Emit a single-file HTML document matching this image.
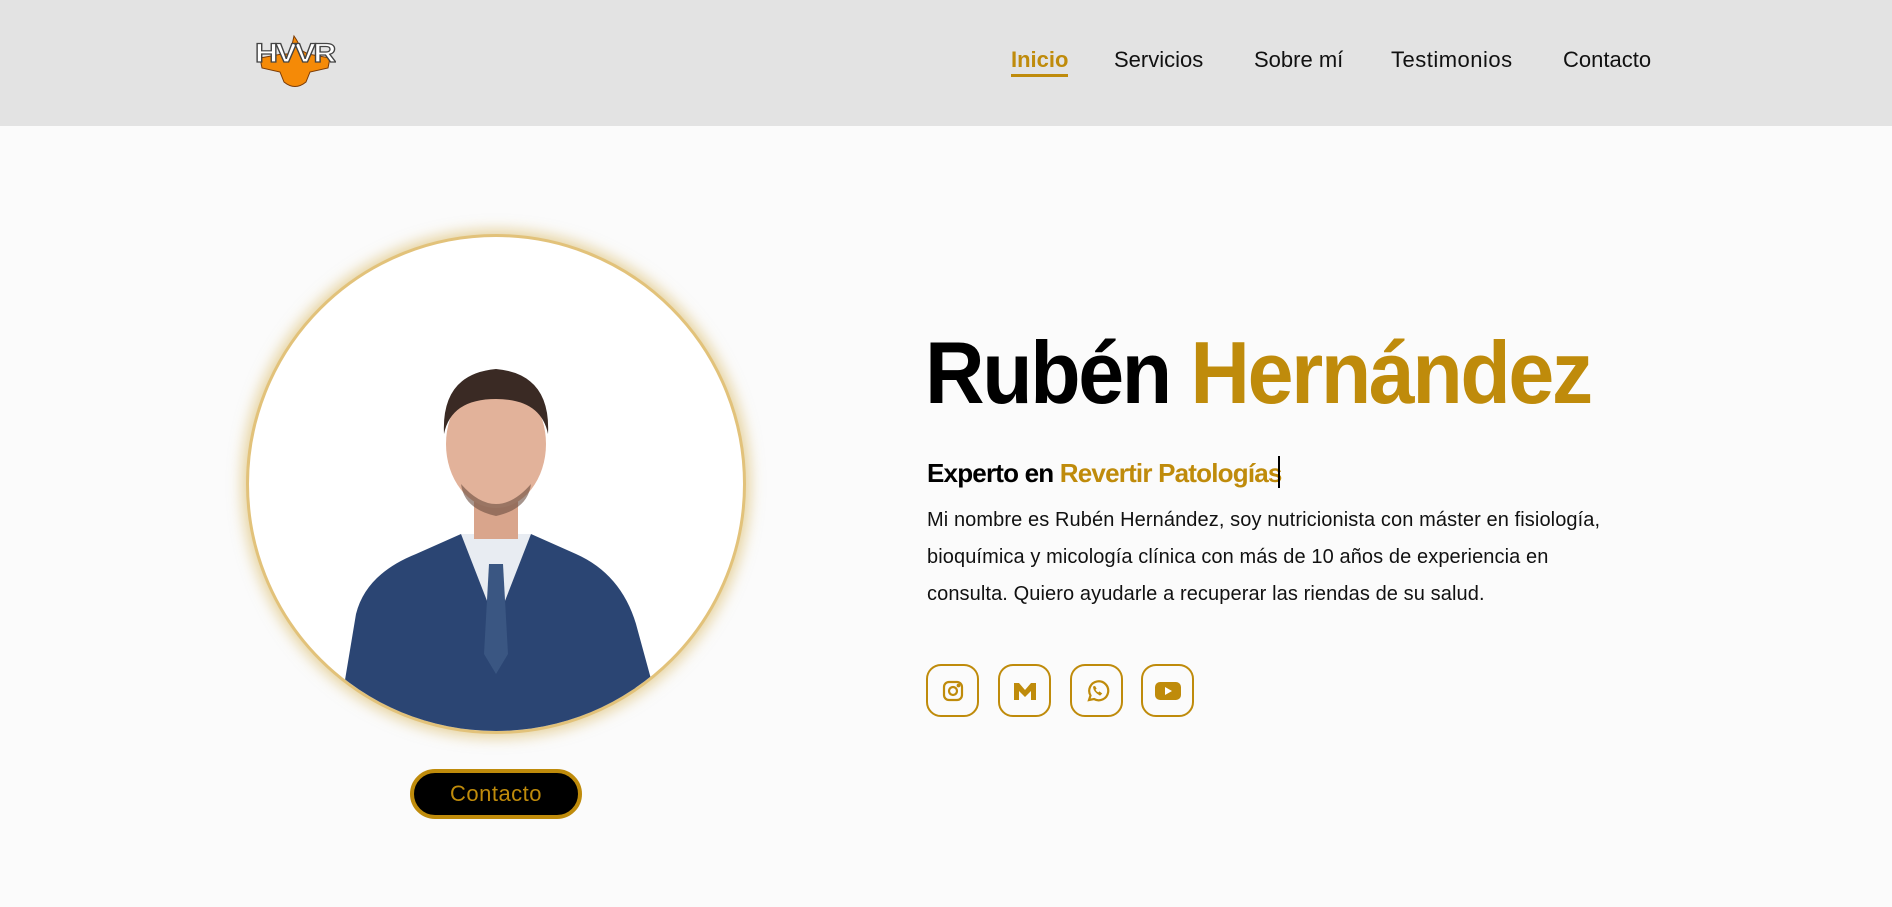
<!DOCTYPE html>
<html><head><meta charset="utf-8"><style>
*{margin:0;padding:0;box-sizing:border-box}
body{width:1892px;height:907px;background:#fbfbfb;font-family:"Liberation Sans",sans-serif;position:relative;overflow:hidden}
header{position:absolute;left:0;top:0;width:1892px;height:126px;background:#e3e3e3}
nav a{position:absolute;top:47px;font-size:22px;color:#111;text-decoration:none;white-space:nowrap}
.gold{color:#bf8b0b}
.circle{position:absolute;left:246px;top:234px;width:500px;height:500px;border-radius:50%;background:#fff;border:3px solid #e2c27a;box-shadow:0 0 14px 4px rgba(214,176,80,.55);overflow:hidden}
.btn{position:absolute;left:410px;top:769px;width:172px;height:50px;border-radius:25px;background:#000;border:4px solid #bf8b0b;color:#bf8b0b;font-size:22px;text-align:center;line-height:42px;letter-spacing:.5px}
h1{position:absolute;left:925px;top:322px;font-size:88px;font-weight:bold;letter-spacing:-2.5px;white-space:nowrap;color:#000;transform:scaleX(.937);transform-origin:0 0}
h2{position:absolute;left:927px;top:456px;font-size:26px;font-weight:bold;letter-spacing:-.8px;white-space:nowrap;color:#000}
.cursor{display:inline-block;width:2px;height:32px;background:#000;vertical-align:-6px;margin-left:-4px}
p{position:absolute;left:927px;top:502px;width:700px;font-size:20px;line-height:37px;color:#111;letter-spacing:.1px}
.ic{position:absolute;top:664px;width:53px;height:53px;border:2px solid #bf8b0b;border-radius:15px;display:flex;align-items:center;justify-content:center}
</style></head><body>
<header>
<svg style="position:absolute;left:254px;top:32px" width="82" height="60" viewBox="0 0 82 56">
<path d="M28 20 L36 20 L40 2 Q45 9 47 16 L54 20 L76 24 L74 34 L56 38 L52 48 Q41 57 30 48 L26 38 L8 34 L6 24 Z" fill="#f58a07" stroke="#7a3a05" stroke-width="1"/>
<text x="1" y="28" font-family="Liberation Sans" font-weight="bold" font-size="27" fill="#fff" stroke="#444" stroke-width="1.2" letter-spacing="-2" textLength="79" lengthAdjust="spacingAndGlyphs">HVVR</text>
</svg>
<nav>
<a style="left:1011px;color:#bf8b0b;font-weight:bold;border-bottom:3px solid #bf8b0b;padding-bottom:1px">Inicio</a>
<a style="left:1114px">Servicios</a>
<a style="left:1254px">Sobre mí</a>
<a style="left:1391px;letter-spacing:.5px">Testimonios</a>
<a style="left:1563px">Contacto</a>
</nav>
</header>
<div class="circle">
<svg width="500" height="500" viewBox="0 0 500 500" style="position:absolute;left:-3px;top:-3px">
<path d="M90 500 L110 380 Q120 340 170 320 L215 300 L285 300 L330 320 Q375 340 390 390 L420 500 Z" fill="#2b4573"/>
<path d="M215 300 L250 390 L285 300 Z" fill="#e8ecf2"/>
<path d="M243 330 L257 330 L262 420 L250 440 L238 420 Z" fill="#3a5682"/>
<rect x="228" y="255" width="44" height="50" fill="#d9a58c"/>
<ellipse cx="250" cy="210" rx="50" ry="64" fill="#e2b29a"/>
<path d="M198 200 Q195 140 250 135 Q305 140 302 200 Q295 165 250 165 Q205 165 198 200 Z" fill="#3a2a24"/>
<path d="M215 250 Q250 290 285 250 Q282 275 250 282 Q218 275 215 250 Z" fill="#6b4c40" opacity=".6"/>
</svg>
</div>
<div class="btn">Contacto</div>
<h1>Rubén <span class="gold">Hernández</span></h1>
<h2>Experto en <span class="gold">Revertir Patologías</span><span class="cursor"></span></h2>
<p>Mi nombre es Rubén Hernández, soy nutricionista con máster en fisiología, bioquímica y micología clínica con más de 10 años de experiencia en consulta. Quiero ayudarle a recuperar las riendas de su salud.</p>
<div class="ic" style="left:926px"><svg width="24" height="24" viewBox="0 0 24 24" fill="none" stroke="#bf8b0b" stroke-width="2.2"><rect x="3" y="3" width="18" height="18" rx="5"/><circle cx="12" cy="12" r="4"/><circle cx="17.5" cy="6.5" r=".8" fill="#bf8b0b"/></svg></div>
<div class="ic" style="left:998px"><svg width="26" height="22" viewBox="0 0 26 22"><path d="M2 20 L2 3 L7 3 L13 10 L19 3 L24 3 L24 20 L19 20 L19 11 L13 17 L7 11 L7 20 Z" fill="#bf8b0b"/></svg></div>
<div class="ic" style="left:1070px"><svg width="26" height="26" viewBox="0 0 26 26" fill="none" stroke="#bf8b0b" stroke-width="2.2"><path d="M5 22 L6.5 17.5 A9.5 9.5 0 1 1 10 21 Z"/><path d="M9.5 9 Q10 14 16 17 L17.5 15.5 L15.5 14 L14.5 15 Q12 14 11 11.5 L12 10.5 L10.8 8.5 Z" fill="#bf8b0b" stroke-width="1"/></svg></div>
<div class="ic" style="left:1141px"><svg width="28" height="22" viewBox="0 0 28 22"><rect x="1" y="2" width="26" height="18" rx="5" fill="#bf8b0b"/><path d="M11 7 L18 11 L11 15 Z" fill="#fff"/></svg></div>
</body></html>
